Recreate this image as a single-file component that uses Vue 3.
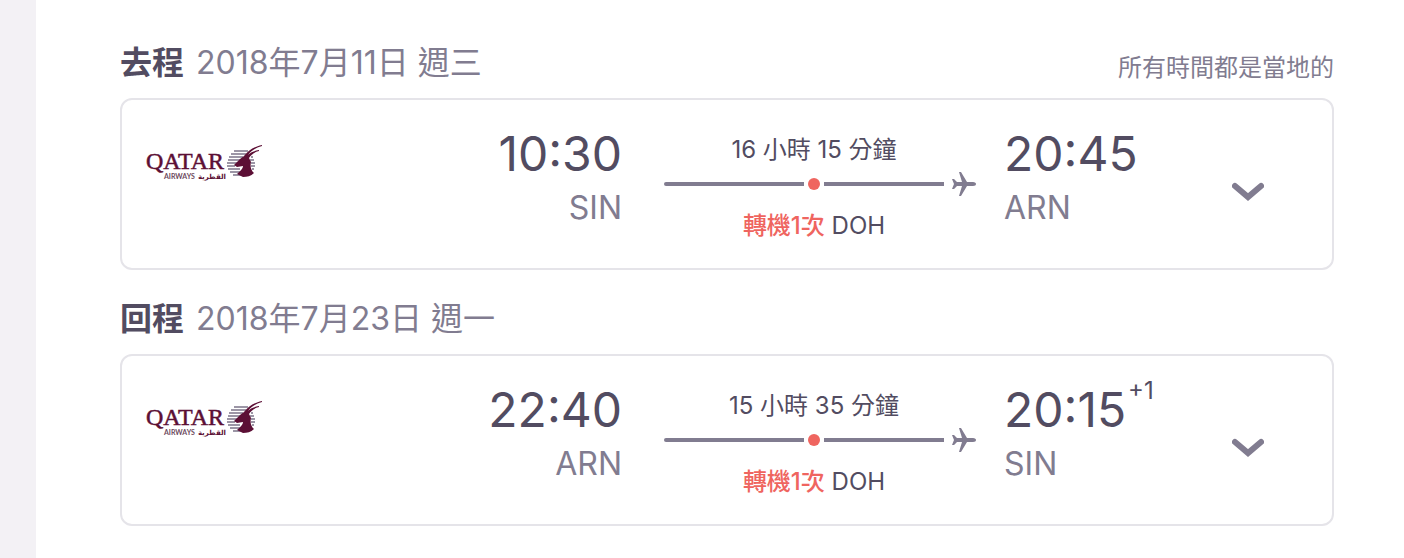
<template>
    <div class="page">
        <main class="content">
            <section v-for="leg in legs" :key="leg.title" class="leg">
                <header class="leg-header">
                    <h2>{{ leg.title }}</h2>
                    <span class="date">{{ leg.date }}</span>
                    <span v-if="leg.note" class="note">{{ leg.note }}</span>
                </header>
                <div class="card">
                    <div class="logo">
                        <svg width="120" height="40" viewBox="0 0 120 40" role="img" aria-label="Qatar Airways">
                            <text class="logo-name" x="0" y="26">QATAR</text>
                            <text class="logo-sub" x="18" y="36">AIRWAYS</text>
                            <text class="logo-arabic" x="80" y="36">القطرية</text>
                            <g stroke="#9c96a6" stroke-width="2">
                                <path d="M88 8h14M85 11h15M83 14h14M82 17h12M81 20h11M81 23h8M82 26h12M84 29h10M87 32h8" />
                                <path d="M105 14h2M104 17h4M105 20h4M105 23h4M106 26h2M104 29h2" />
                            </g>
                            <path fill="#5c0f35" d="M94 16l4-3c4-5 9-9 18-11v1c-7 2-11 5-14 9 3-3 6-4 11-5v1c-5 1-8 4-10 7l2 4c-1 5 0 8 3 11-3 3-7 4-11 4l-6-3c3-3 6-5 6-8l-6 1-3-2z" />
                        </svg>
                    </div>
                    <div class="point departure">
                        <div class="time">{{ leg.departTime }}</div>
                        <div class="code">{{ leg.from }}</div>
                    </div>
                    <div class="route">
                        <div class="duration">{{ leg.duration }}</div>
                        <div class="track">
                            <span class="line first"></span>
                            <span class="dot"></span>
                            <span class="line"></span>
                            <svg class="plane" width="26" height="26" viewBox="0 0 26 26">
                                <path fill="#817c90" d="M26 13c0-1-1-2-3-2h-6L11 1H9l3 10H7L4 8H2l2 5-2 5h2l3-3h5L9 25h2l6-10h6c2 0 3-1 3-2z" />
                            </svg>
                        </div>
                        <div class="stops"><span>{{ leg.stops }}</span> {{ leg.via }}</div>
                    </div>
                    <div class="point arrival">
                        <div class="time">{{ leg.arriveTime }}<sup v-if="leg.dayShift">{{ leg.dayShift }}</sup></div>
                        <div class="code">{{ leg.to }}</div>
                    </div>
                    <button type="button" class="toggle" aria-label="詳情" @click="leg.open = !leg.open">
                        <svg width="32" height="20" viewBox="0 0 32 20">
                            <path d="M3 4l13 11L29 4" fill="none" stroke="#817c90" stroke-width="6" stroke-linecap="round" />
                        </svg>
                    </button>
                </div>
            </section>
        </main>
    </div>
</template>

<script setup>
import { ref } from 'vue'

const legs = ref([
    {
        title: '去程',
        date: '2018年7月11日 週三',
        note: '所有時間都是當地的',
        departTime: '10:30',
        from: 'SIN',
        duration: '16 小時 15 分鐘',
        stops: '轉機1次',
        via: 'DOH',
        arriveTime: '20:45',
        to: 'ARN',
        dayShift: '',
        open: false
    },
    {
        title: '回程',
        date: '2018年7月23日 週一',
        note: '',
        departTime: '22:40',
        from: 'ARN',
        duration: '15 小時 35 分鐘',
        stops: '轉機1次',
        via: 'DOH',
        arriveTime: '20:15',
        to: 'SIN',
        dayShift: '+1',
        open: false
    }
])
</script>

<style>
body {
    margin: 0;
    background-color: #fff;
}
</style>

<style scoped>
.page {
    min-height: 100vh;
    box-sizing: border-box;
    border-left: 36px solid #f3f1f5;
    color: #524c61;
    font-family: Inter, "Noto Sans CJK TC", sans-serif;
}

.content {
    padding: 14px 70px 0 84px;
}

.leg-header {
    display: flex;
    align-items: flex-end;
    gap: 12px;
    padding: 25px 0 11px;
    font-size: 32px;
    line-height: 48px;
}

.leg-header h2 {
    margin: 0;
    font-size: 32px;
    font-weight: 700;
}

.date {
    color: #817c90;
}

.note {
    margin-left: auto;
    color: #817c90;
    font-size: 24px;
    line-height: 38px;
}

.card {
    display: grid;
    grid-template-columns: 1fr 160px 382px 212px 64px;
    align-items: start;
    padding: 27px 52px 21px 24px;
    border: 2px solid #e5e4e9;
    border-radius: 12px;
}

.logo {
    padding-top: 16px;
}

.logo svg {
    display: block;
}

.logo-name {
    font-family: "Liberation Serif", serif;
    font-size: 24px;
    fill: #5c0f35;
    stroke: #5c0f35;
    stroke-width: 0.5px;
}

.logo-sub {
    font-family: Lato, sans-serif;
    font-size: 7px;
    font-weight: 700;
    fill: #6d4a60;
}

.logo-arabic {
    direction: rtl;
    font-family: "DejaVu Sans", sans-serif;
    font-size: 7px;
    font-weight: 700;
    fill: #5c0f35;
}

.departure {
    text-align: right;
}

.time {
    font-size: 48px;
    line-height: 54px;
}

.code {
    color: #817c90;
    font-size: 32px;
    line-height: 54px;
}

.time sup {
    position: relative;
    top: -14px;
    margin-left: 2px;
    font-size: 24px;
    line-height: 0;
    vertical-align: 14px;
}

.route {
    margin: 0 28px 0 42px;
    padding-top: 2px;
    font-size: 24px;
    line-height: 42px;
}

.duration,
.stops {
    width: 300px;
    text-align: center;
}

.stops {
    margin-top: 8px;
}

.stops span {
    color: #ef655f;
    font-weight: 500;
}

.track {
    display: flex;
    align-items: center;
    height: 26px;
}

.line {
    width: 120px;
    height: 4px;
    background-color: #817c90;
}

.line.first {
    width: 140px;
    border-radius: 2px 0 0 2px;
}

.dot {
    width: 12px;
    height: 12px;
    margin: 0 4px;
    border-radius: 50%;
    background-color: #ef655f;
}

.plane {
    margin-left: 6px;
}

.toggle {
    display: flex;
    justify-content: center;
    margin-top: 47px;
    padding: 8px 0;
    border: none;
    background: none;
    cursor: pointer;
}
</style>
